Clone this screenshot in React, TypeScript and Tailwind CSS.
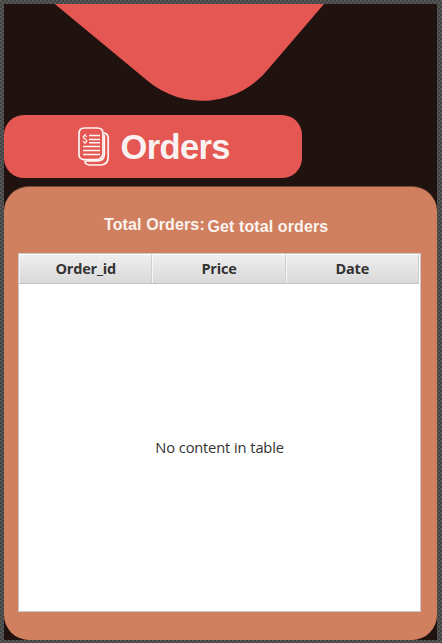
function OrdersIcon() {
  return (
    <svg className="h-[40px] w-[32px]" viewBox="0 0 32 40" fill="none" stroke="#fdf5f4" strokeWidth="1.7">
      <path d="M26 6.200 Q30.200 6.800 30.200 11 V30 Q30.200 38 22 38 H11.500 Q7.200 37.600 6.600 33.500" />
      <path d="M26.300 8 V27 Q26.300 33.600 20 33.800 H8" />
      <path
        d="M6.500 1 H19.500 Q25 1 25 6.500 V25.500 Q25 32.700 17.500 32.700 H6.500 Q1 32.700 1 27 V6.500 Q1 1 6.500 1 Z"
        fill="#e55752"
      />
      <path d="M11 8.500 H22 M11 12.500 H22 M11 15.800 H22 M5 19.500 H22 M5 23.500 H22 M5 27.500 H22" strokeWidth="1.500" />
      <path d="M8.800 9.800 Q7 7.800 5.500 9.300 Q4.800 11 7 12 Q9.500 13.200 8.500 14.800 Q7 16.200 5 14.300 M7 7 V9 M7 15 V17" strokeWidth="1.200" />
    </svg>
  );
}

const columns = ["Order_id", "Price", "Date"];

export default function App() {
  return (
    <div className="h-[643px] w-[442px] bg-[#4b4b4b] bg-[repeating-conic-gradient(#424242_0_25%,#585858_0_50%)] bg-[length:4px_4px] pt-1 pr-[5px] pb-[3px] pl-1">
      <main className="flex h-[636px] w-[433px] flex-col overflow-hidden bg-[#20130f]">
        <svg className="block h-[111px] w-[433px] shrink-0" viewBox="4 4 433 111">
          <path d="M54.800 4 L147.500 80.700 A84.500 84.500 0 0 0 268.500 68.700 L324 4 Z" fill="#e55752" />
        </svg>
        <header className="flex h-[63px] w-[298px] shrink-0 rounded-[20px] bg-[#e55752] pl-[74px]">
          <div className="pt-3">
            <OrdersIcon />
          </div>
          <h1 className="ml-[10.500px] pt-[12px] font-['Liberation_Sans',Arial,sans-serif] text-[34.500px] leading-[40px] font-bold tracking-[-0.650px] text-[#faf2f1]">
            Orders
          </h1>
        </header>
        <section className="mt-[8px] flex h-[454px] shrink-0 flex-col rounded-[25px] border-t border-[#784a38] bg-[#d0805f]">
          <div className="flex h-[66px] shrink-0 pl-[100px] font-['Liberation_Sans',Arial,sans-serif] text-[16px] leading-[20px] font-bold whitespace-nowrap text-[#fbf3ef]">
            <span className="w-[103.500px] pt-[28px] tracking-[0.12px]">Total Orders:</span>
            <span className="pt-[30px] tracking-[0.100px]">Get total orders</span>
          </div>
          <div className="ml-[14px] flex h-[359px] w-[403px] flex-col border border-[#c8c8c8] bg-white font-['Open_Sans','Noto_Sans',sans-serif] text-[#333]">
            <div className="mr-px flex h-[30px] shrink-0 border-b border-[#c4c4c4] bg-linear-to-b from-[#efefef] to-[#d9d9d9]">
              {columns.map((name) => (
                <div
                  key={name}
                  className="flex w-[134px] items-center justify-center border-t border-r border-l border-t-white border-r-[#cfcfcf] border-l-[#f6f6f6] text-[14.500px] leading-[20px] font-bold tracking-[-0.200px]"
                >
                  {name}
                </div>
              ))}
            </div>
            <div className="flex flex-1 items-center justify-center text-[14.700px] tracking-[-0.200px] [word-spacing:0.400px]">
              No content in table
            </div>
          </div>
        </section>
      </main>
    </div>
  );
}
